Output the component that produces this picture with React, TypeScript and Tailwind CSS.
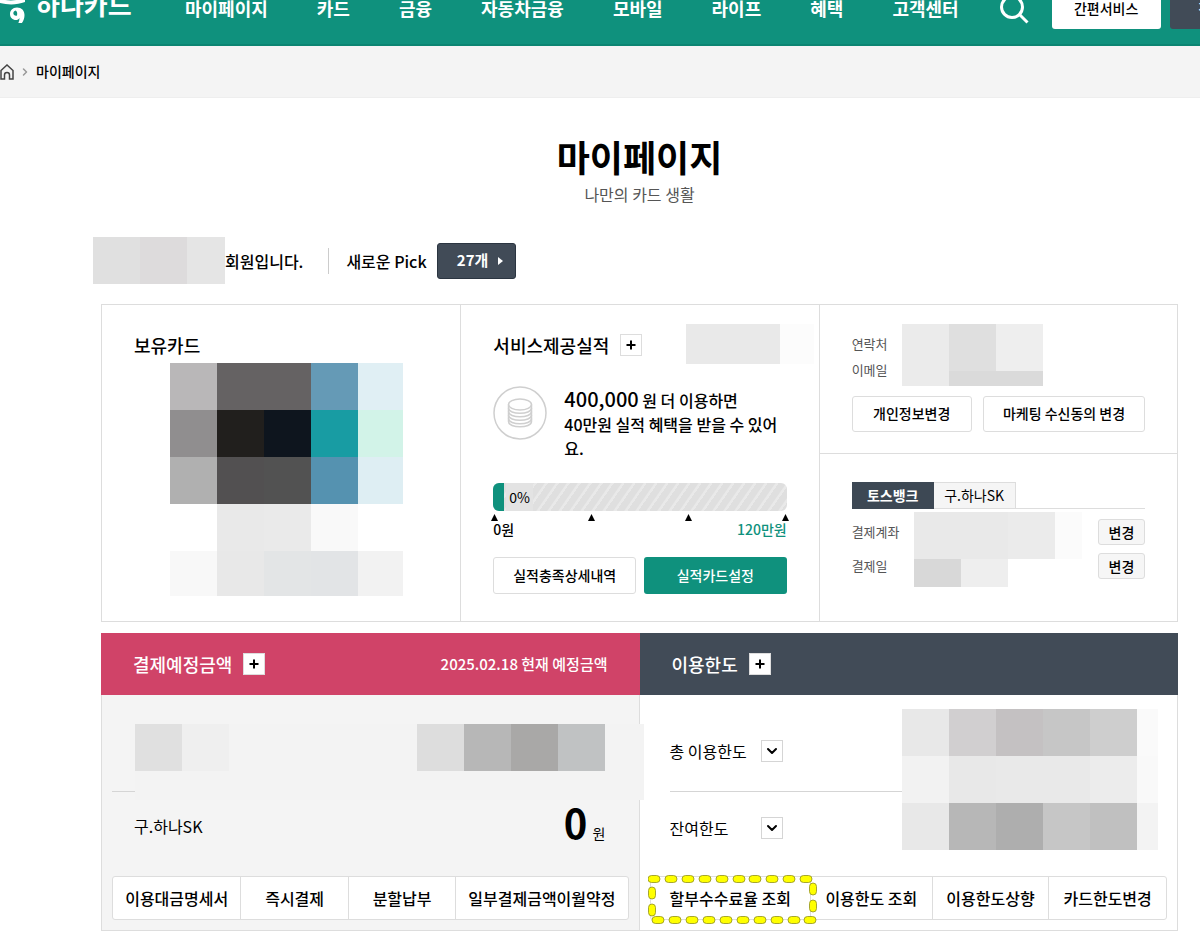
import { useState } from 'react';
import { ChevronDown, ChevronRight } from 'lucide-react';

const menus = ['마이페이지', '카드', '금융', '자동차금융', '모바일', '라이프', '혜택', '고객센터']

const cardCells = [
    ['bg-[#b9b7b8]', 'bg-[#656263]', 'bg-[#656263]', 'bg-[#659ab6]', 'bg-[#e0eff4]'],
    ['bg-[#908e8f]', 'bg-[#211f1d]', 'bg-[#0e151e]', 'bg-[#189ca3]', 'bg-[#d2f3e8]'],
    ['bg-[#b0b0b0]', 'bg-[#525051]', 'bg-[#525252]', 'bg-[#5592b0]', 'bg-[#deeef3]'],
    ['bg-white', 'bg-[#e9e9e9]', 'bg-[#eaeaea]', 'bg-[#f9f9f9]', 'bg-white'],
    ['bg-[#f8f8f8]', 'bg-[#e8e8e8]', 'bg-[#e3e5e6]', 'bg-[#e2e4e6]', 'bg-[#f2f2f2]'],
]

const limitCells = [
    ['bg-[#e8e8e8]', 'bg-[#d1cfd0]', 'bg-[#c4c1c2]', 'bg-[#c6c6c6]', 'bg-[#cecece]', 'bg-[#fafafa]'],
    ['bg-[#f2f2f2]', 'bg-[#e8e8e8]', 'bg-[#e9e9e9]', 'bg-[#e9e9e9]', 'bg-[#ececec]', 'bg-[#f9f9f9]'],
    ['bg-[#e8e8e8]', 'bg-[#b7b7b7]', 'bg-[#aeaeae]', 'bg-[#c6c6c6]', 'bg-[#c0c0c0]', 'bg-[#f3f3f3]'],
]

// masks private data with 47px blocks, clipped to the size given in className
function Mosaic({ cells, className }: { cells: string[][], className: string }) {
    return (
        <div aria-hidden="true" className={`shrink-0 overflow-hidden ${className}`}>
            {cells.map((row, i) => (
                <div key={i} className="flex">
                    {row.map((color, j) => <div key={j} className={`size-[47px] shrink-0 ${color}`} />)}
                </div>
            ))}
        </div>
    )
}

function PlusButton({ label }: { label: string }) {
    return (
        <button type="button" aria-label={label} className="flex size-[22px] items-center justify-center border border-[#ddd] bg-white">
            <svg viewBox="0 0 10 10" className="size-[10px]">
                <path d="M5 0.5v9M0.5 5h9" stroke="#000" strokeWidth="2" />
            </svg>
        </button>
    )
}

function ArrowButton({ label }: { label: string }) {
    return (
        <button type="button" aria-label={label} className="flex size-[22px] items-center justify-center border border-[#d5d5d5] bg-white">
            <ChevronDown size={16} strokeWidth={3} color="#000" />
        </button>
    )
}

function Highlight() {
    const top = [6, 23, 40, 57, 74, 91, 107, 124, 141, 158]
    const bottom = [10, 27, 44, 61, 78, 95, 112, 129, 146, 162]
    return (
        <svg viewBox="0 0 170 50" aria-hidden="true" className="pointer-events-none absolute -top-[1px] -left-[2px] h-[50px] w-[170px]">
            <g fill="#ffff00" stroke="#8f8f1c" strokeWidth="0.8">
                {top.map((x) => <rect key={x} x={x - 6} y="0.5" width="12" height="7" rx="3.5" />)}
                {bottom.map((x) => <rect key={x} x={x - 6} y="41.5" width="12" height="7" rx="3.5" />)}
                {[18, 35].map((y) => <rect key={y} x="0.5" y={y - 6} width="7" height="12" rx="3.5" />)}
                {[14, 31].map((y) => <rect key={y} x="161.5" y={y - 6} width="7" height="12" rx="3.5" />)}
            </g>
        </svg>
    )
}

function Header() {
    return (
        <header className="h-[46px] overflow-hidden border-b-2 border-[#0b8572] bg-[#0f917d]">
            <div className="-mt-[28px] flex h-[74px] items-center whitespace-nowrap">
                <a href="#" className="flex w-[185px] shrink-0 items-center gap-2 pb-[12px] text-[26px] font-bold text-white">
                    <svg viewBox="0 0 28 40" className="h-[40px] w-[28px]">
                        <path d="M0 16c8 2 16 2 25-1v4c-8 3-17 3-25 1z" fill="#fff" />
                        <path d="M17 24.500c4.500 0 7.500 3 7.500 7.500 0 5-2.500 9-7 12.500l-1.500-1c2.500-3 3.500-5.500 3.500-8.500-1 1.500-2 2-3.500 2-3.500 0-6-2.500-6-6s2.500-6.500 7-6.500zm-1.500 3c-1.500.500-2.500 2-2 3.500s2 2 3.500 1.500c.5-2.500 0-4.500-1.500-5z" fill="#fff" fillRule="evenodd" />
                    </svg>
                    하나카드
                </a>
                <nav className="flex gap-[49px] pb-[2px] text-lg font-bold text-white">
                    {menus.map((menu) => <a key={menu} href="#">{menu}</a>)}
                </nav>
                <button type="button" aria-label="검색" className="ml-[41px] shrink-0">
                    <svg viewBox="0 0 30 30" className="size-[30px]" fill="none" stroke="#fff" strokeWidth="3">
                        <circle cx="12" cy="13" r="10.500" />
                        <path d="M19.500 20.500l8 8" />
                    </svg>
                </button>
                <button type="button" className="ml-[22px] h-[40px] w-[109px] shrink-0 rounded-[3px] bg-white pb-[2px] text-sm font-medium text-black">간편서비스</button>
                <button type="button" className="ml-[9px] h-[40px] w-[109px] shrink-0 rounded-[3px] bg-[#414b57] pb-[2px] text-sm font-medium text-white">전체메뉴</button>
            </div>
        </header>
    )
}

function CardPanel() {
    return (
        <section className="px-[32px] pt-[26px]">
            <h2 className="text-lg leading-[28px] font-medium">보유카드</h2>
            <Mosaic cells={cardCells} className="mt-[4px] ml-[36px] h-[233px] w-[233px]" />
        </section>
    )
}

function ServicePanel() {
    return (
        <section className="relative border-l border-[#ddd] px-[32px] pt-[26px]">
            <div className="flex items-center gap-[11px]">
                <h2 className="text-lg leading-[28px] font-medium">서비스제공실적</h2>
                <PlusButton label="서비스제공실적 더보기" />
            </div>
            <Mosaic cells={[['bg-[#e9e9e9]', 'bg-[#e9e9e9]', 'bg-[#fcfcfc]']]} className="absolute top-[19px] right-[5px] h-[40px] w-[128px]" />

            <div className="mt-[26px] flex h-[74px] gap-[17px]">
                <svg viewBox="0 0 54 54" className="mt-[1px] size-[54px] shrink-0" fill="none" stroke="#cfcfcf" strokeWidth="1.500">
                    <circle cx="27" cy="27" r="26" />
                    <ellipse cx="27" cy="18.500" rx="11.500" ry="5.500" />
                    <path d="M15.500 18.500v17c0 7 23 7 23 0v-17" />
                    <path d="M15.500 22c0 7 23 7 23 0M15.500 25.500c0 7 23 7 23 0M15.500 29c0 7 23 7 23 0M15.500 32.500c0 7 23 7 23 0" />
                </svg>
                <p className="pt-[2px] text-base leading-[24px] font-medium break-all">
                    <strong className="text-xl leading-[24px] font-medium">400,000</strong> 원 더 이용하면<br />
                    40만원 실적 혜택을 받을 수 있어요.
                </p>
            </div>

            <div role="progressbar" aria-label="실적 달성률" aria-valuenow={0} className="mt-[24px] flex h-[28px] items-center overflow-hidden rounded-[6px] bg-[repeating-linear-gradient(125deg,#dfdfdf_0,#dfdfdf_6px,#e9e9e9_7px,#e9e9e9_9px)] text-sm">
                <span className="mr-[2px] h-full w-[11px] bg-[#0f917d]" />
                <span className="h-full bg-[#e3e3e3] px-[3px] leading-[28px]">0%</span>
            </div>
            <div className="-mx-[2px] mt-[3px] flex justify-between">
                {[0, 1, 2, 3].map((i) => (
                    <svg key={i} viewBox="0 0 7 7" className="size-[7px]"><path d="M3.500 0L7 7H0z" /></svg>
                ))}
            </div>
            <div className="flex justify-between text-sm leading-[16px] font-medium">
                <span>0원</span>
                <span className="text-[#0f917d]">120만원</span>
            </div>
            <div className="mt-[20px] grid grid-cols-2 gap-2 text-sm font-medium">
                <button type="button" className="h-[37px] rounded-[3px] border border-[#ddd] bg-white pb-[2px]">실적충족상세내역</button>
                <button type="button" className="h-[37px] rounded-[3px] bg-[#0f917d] pb-[2px] text-white">실적카드설정</button>
            </div>
        </section>
    )
}

function InfoPanel() {
    const [tab, setTab] = useState('토스뱅크')

    return (
        <section className="border-l border-[#ddd]">
            <div className="border-b border-[#ddd] px-[32px] pt-[19px] pb-[21px]">
                <div className="flex h-[62px]">
                    <div className="w-[50px] pt-[7px] text-[13px] leading-[26px] text-[#555]">
                        <p>연락처</p>
                        <p>이메일</p>
                    </div>
                    <Mosaic
                        cells={[['bg-[#ebebeb]', 'bg-[#dfdfdf]', 'bg-[#eeeeee]'], ['bg-[#ebebeb]', 'bg-[#dadada]', 'bg-[#dadada]']]}
                        className="h-[62px] w-[141px]"
                    />
                </div>
                <div className="mt-[10px] flex justify-between text-sm font-medium whitespace-nowrap">
                    <button type="button" className="h-[36px] w-[120px] rounded-[3px] border border-[#ddd] pb-[2px]">개인정보변경</button>
                    <button type="button" className="h-[36px] w-[162px] rounded-[3px] border border-[#ddd] pb-[2px]">마케팅 수신동의 변경</button>
                </div>
            </div>
            <div className="px-[32px] pt-[28px]">
                <div className="flex h-[27px] border-b border-[#ddd] text-sm">
                    {['토스뱅크', '구.하나SK'].map((name) => (
                        <button
                            key={name}
                            type="button"
                            onClick={() => setTab(name)}
                            className={tab === name
                                ? 'h-[27px] w-[82px] bg-[#3d4854] pb-[2px] font-bold text-white'
                                : 'h-[27px] w-[82px] border border-l-0 border-[#ddd] bg-[#f5f5f5] pb-[2px]'}
                        >
                            {name}
                        </button>
                    ))}
                </div>
                <div className="flex">
                    <div className="w-[62px] pt-[6px] text-[13px] leading-[34px] whitespace-nowrap text-[#555]">
                        <p>결제계좌</p>
                        <p>결제일</p>
                    </div>
                    <Mosaic
                        cells={[['bg-[#e9e9e9]', 'bg-[#e9e9e9]', 'bg-[#ebebeb]', 'bg-[#fbfbfb]'], ['bg-[#d8d8d8]', 'bg-[#eeeeee]', 'bg-white', 'bg-white']]}
                        className="mt-[3px] h-[75px] w-[168px]"
                    />
                    <div className="mt-[10px] ml-auto flex flex-col gap-2 text-sm font-medium">
                        <button type="button" className="h-[26px] w-[47px] rounded-[3px] border border-[#ddd] bg-[#f6f6f6]">변경</button>
                        <button type="button" className="h-[26px] w-[47px] rounded-[3px] border border-[#ddd] bg-[#f6f6f6]">변경</button>
                    </div>
                </div>
            </div>
        </section>
    )
}

function PaymentPanel() {
    return (
        <section className="flex flex-col">
            <div className="flex h-[62px] items-center bg-[#d04368] px-[32px] text-white">
                <h2 className="mr-[11px] text-lg font-medium">결제예정금액</h2>
                <PlusButton label="결제예정금액 더보기" />
                <span className="ml-auto text-[15px] font-medium">2025.02.18 현재 예정금액</span>
            </div>
            <div className="relative flex-1 border-r border-b border-l border-[#ddd] bg-[#f4f4f4] px-[10px] pb-[10px]">
                <div className="h-[97px] border-b border-[#d5d5d5]" />
                {/* first account row is masked */}
                <div className="absolute top-[29px] -right-[5px] left-[33px] flex h-[76px] justify-between bg-[#f3f3f3] pr-[39px]">
                    <Mosaic cells={[['bg-[#e0e0e0]', 'bg-[#efefef]']]} className="h-[47px] w-[95px]" />
                    <Mosaic cells={[['bg-[#dddddd]', 'bg-[#b7b7b7]', 'bg-[#a9a8a7]', 'bg-[#c0c2c3]']]} className="h-[47px] w-[188px]" />
                </div>
                <div className="flex h-[84px] justify-between pr-[23px] pl-[22px]">
                    <span className="text-base leading-[68px]">구.하나SK</span>
                    <p className="text-sm leading-[60px]"><strong className="mr-[2px] text-[40px] font-bold">0</strong> 원</p>
                </div>
                <div className="grid h-[44px] grid-cols-[129fr_108fr_108fr_172fr] divide-x divide-[#ddd] rounded-[3px] border border-[#ddd] bg-white font-medium whitespace-nowrap">
                    <button type="button">이용대금명세서</button>
                    <button type="button">즉시결제</button>
                    <button type="button">분할납부</button>
                    <button type="button">일부결제금액이월약정</button>
                </div>
            </div>
        </section>
    )
}

function LimitPanel() {
    return (
        <section className="flex flex-col">
            <div className="flex h-[62px] items-center gap-[11px] bg-[#414b57] px-[32px] text-white">
                <h2 className="text-lg font-medium">이용한도</h2>
                <PlusButton label="이용한도 더보기" />
            </div>
            <div className="relative flex-1 border-r border-b border-[#ddd] px-[10px] pt-[15px] pb-[10px]">
                <div className="mx-[20px] flex h-[82px] items-center border-b border-[#d5d5d5]">
                    <span className="w-[91px]">총 이용한도</span>
                    <ArrowButton label="총 이용한도 열기" />
                </div>
                <div className="mx-[20px] flex h-[84px] items-center pb-[12px]">
                    <span className="w-[91px]">잔여한도</span>
                    <ArrowButton label="잔여한도 열기" />
                </div>
                <Mosaic cells={limitCells} className="absolute top-[14px] right-[19px] h-[141px] w-[256px]" />
                <div className="relative">
                    <div className="grid h-[44px] grid-cols-[161fr_122fr_117fr_117fr] divide-x divide-[#ddd] rounded-[3px] border border-[#ddd] bg-white font-medium whitespace-nowrap">
                        <button type="button">할부수수료율 조회</button>
                        <button type="button">이용한도 조회</button>
                        <button type="button">이용한도상향</button>
                        <button type="button">카드한도변경</button>
                    </div>
                    <Highlight />
                </div>
            </div>
        </section>
    )
}

export default function App() {
    return (
        <div className="min-h-screen overflow-x-hidden bg-white font-['Noto_Sans_CJK_KR',sans-serif] text-black">
            <Header />
            <div className="flex h-[52px] items-center border-b border-[#eee] bg-[#f4f4f4] text-sm">
                <a href="#" aria-label="홈">
                    <svg viewBox="0 0 14 16" className="h-[16px] w-[14px]" fill="none" stroke="#444" strokeWidth="1.500">
                        <path d="M1 6.500L7 1l6 5.500V15H9.500v-4a2.500 2.500 0 0 0-5 0v4H1z" />
                    </svg>
                </a>
                <ChevronRight size={12} strokeWidth={3} color="#999" className="mx-[5px]" />
                <span className="pb-[2px] font-medium">마이페이지</span>
            </div>

            <main className="pr-[22px] pl-[101px]">
                <div className="pt-[33px] text-center">
                    <h1 className="text-4xl leading-[50px] font-bold">마이페이지</h1>
                    <p className="text-base leading-[26px] text-[#555]">나만의 카드 생활</p>
                </div>

                <div className="mt-[30px] -ml-2 flex h-[47px] items-center font-medium">
                    <Mosaic cells={[['bg-[#e0e0e0]', 'bg-[#dddbdc]', 'bg-[#e5e5e5]']]} className="h-[47px] w-[132px]" />
                    <span>회원입니다.</span>
                    <span className="mr-[17px] ml-[25px] h-[26px] w-px bg-[#ccc]" />
                    <span>새로운 Pick</span>
                    <button type="button" className="ml-[10px] flex h-[36px] w-[79px] items-center justify-center gap-[10px] rounded-[3px] border border-[#2b3541] bg-[#414b57] pl-[8px] text-[15px] font-bold text-white">
                        27개
                        <svg viewBox="0 0 5 8" className="h-[8px] w-[5px]"><path d="M0 0l5 4-5 4z" fill="#fff" /></svg>
                    </button>
                </div>

                <div className="mt-[20px] grid h-[318px] grid-cols-3 border border-[#ddd]">
                    <CardPanel />
                    <ServicePanel />
                    <InfoPanel />
                </div>

                <div className="mt-[11px] grid h-[298px] grid-cols-2">
                    <PaymentPanel />
                    <LimitPanel />
                </div>
            </main>
        </div>
    )
}
